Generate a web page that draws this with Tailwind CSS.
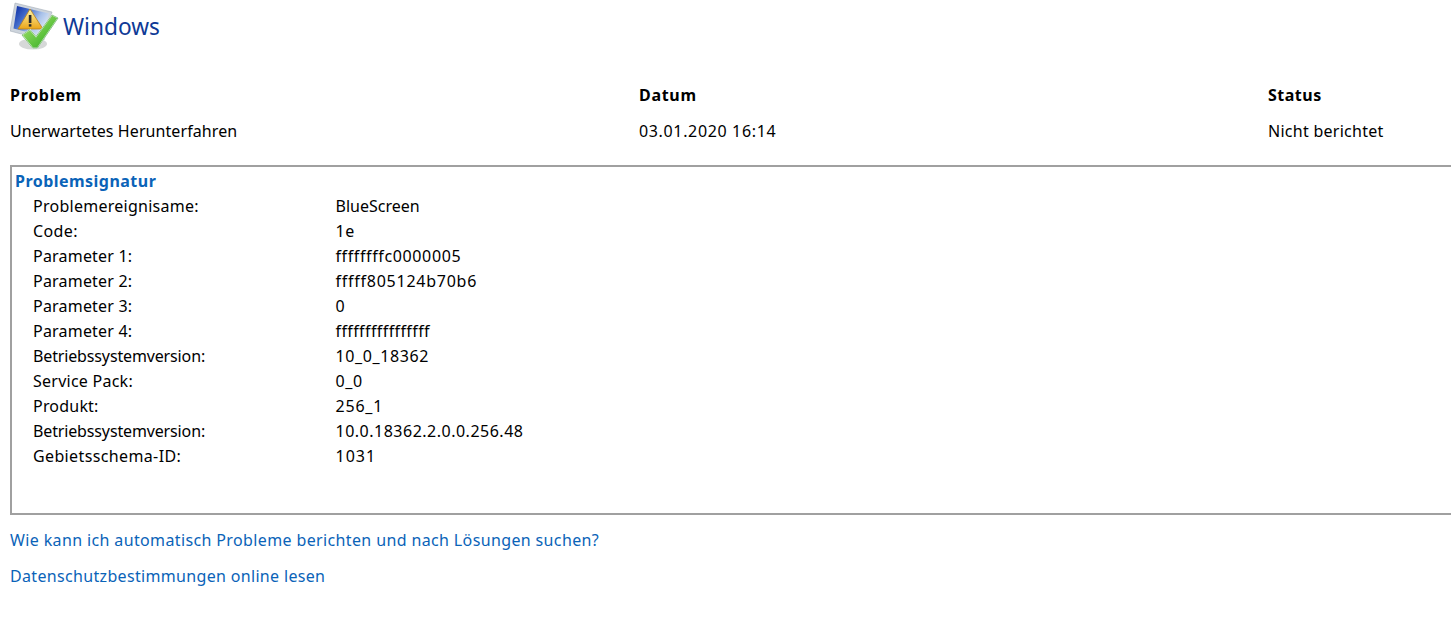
<!DOCTYPE html>
<html lang="de">
<head>
  <meta charset="UTF-8" />
  <title>Windows</title>
  <script src="https://cdn.jsdelivr.net/npm/@tailwindcss/browser@4"></script>
</head>
<body class="bg-white h-[617px] overflow-hidden font-['Noto_Sans',sans-serif] text-[16px] text-black">
  <div class="w-[1480px] pl-[10px]">
    <!-- header -->
    <div class="flex items-center h-[52px]">
      <svg class="w-[50px] h-[52px] shrink-0" viewBox="10 0 50 52">
        <defs>
          <linearGradient id="scr" x1="0" y1="0" x2="1" y2="0.6"><stop offset="0" stop-color="#0626a0"/><stop offset="0.35" stop-color="#3f68c8"/><stop offset="0.7" stop-color="#a9c2ea"/><stop offset="1" stop-color="#dfe9f8"/></linearGradient>
          <linearGradient id="tri" x1="0" y1="0" x2="0" y2="1"><stop offset="0" stop-color="#fff5a8"/><stop offset="1" stop-color="#eaa51a"/></linearGradient>
          <linearGradient id="chk" x1="0" y1="0" x2="1" y2="1"><stop offset="0" stop-color="#b5e67a"/><stop offset="0.6" stop-color="#5cc23c"/><stop offset="1" stop-color="#2e9a2a"/></linearGradient>
        </defs>
        <ellipse cx="33" cy="44" rx="14" ry="5.5" fill="#d6d8d8"/>
        <path d="M15 3 L52 12 L44 40 L10 31 Z" fill="#cdd4dc" stroke="#9aa5b0" stroke-width="0.5"/>
        <path d="M17 6 L49 13.5 L42.5 36 L13.5 28.5 Z" fill="url(#scr)"/>
        <path d="M30 9 L43 29 L18 29 Z" fill="url(#tri)" stroke="#b9801a" stroke-width="0.8"/>
        <rect x="28.8" y="15" width="2.6" height="8" fill="#2a2a2a"/>
        <rect x="28.8" y="24.2" width="2.6" height="2.4" fill="#2a2a2a"/>
        <path d="M22 35 L30 29.5 L36 36.5 L52 15 L58 18 L37.5 48 L32.5 48 Z" fill="url(#chk)" stroke="#fff" stroke-width="1.2"/>
        <path d="M22 35 L30 29.5 L36 36.5 L52 15 L58 18 L37.5 48 L32.5 48 Z" fill="none" stroke="#3d9a35" stroke-width="0.6"/>
      </svg>
      <span class="text-[#0f3a96] text-[22.7px] leading-none ml-[3px] relative top-[1px]">Windows</span>
    </div>

    <!-- columns -->
    <div class="grid grid-cols-[629px_629px_1fr] mt-[31px] leading-[24px]">
      <div class="font-bold tracking-[0.7px]">Problem</div>
      <div class="font-bold tracking-[0.7px]">Datum</div>
      <div class="font-bold tracking-[0.5px]">Status</div>
      <div class="mt-[12px] tracking-[0.08px]">Unerwartetes Herunterfahren</div>
      <div class="mt-[12px] tracking-[0.65px]">03.01.2020 16:14</div>
      <div class="mt-[12px] tracking-[0.27px]">Nicht berichtet</div>
    </div>

    <!-- signature box -->
    <div class="mt-[22px] h-[350px] border-2 border-[#a0a0a0] pl-[3px] pt-[2px] leading-[25px]">
      <div class="font-bold text-[#0a63b8] tracking-[0.47px]">Problemsignatur</div>
      <dl class="grid grid-cols-[302.5px_1fr] pl-[18px]">
        <dt class="tracking-[0.26px]">Problemereignisame:</dt><dd>BlueScreen</dd>
        <dt class="tracking-[0.4px]">Code:</dt><dd class="tracking-[0.5px]">1e</dd>
        <dt class="tracking-[0.2px]">Parameter 1:</dt><dd class="tracking-[0.62px]">ffffffffc0000005</dd>
        <dt class="tracking-[0.2px]">Parameter 2:</dt><dd class="tracking-[0.75px]">fffff805124b70b6</dd>
        <dt class="tracking-[0.2px]">Parameter 3:</dt><dd>0</dd>
        <dt class="tracking-[0.2px]">Parameter 4:</dt><dd class="tracking-[0.4px]">ffffffffffffffff</dd>
        <dt class="tracking-[-0.14px]">Betriebssystemversion:</dt><dd class="tracking-[0.6px]">10_0_18362</dd>
        <dt class="tracking-[0.25px]">Service Pack:</dt><dd class="tracking-[0.6px]">0_0</dd>
        <dt class="tracking-[0.2px]">Produkt:</dt><dd class="tracking-[0.8px]">256_1</dd>
        <dt class="tracking-[-0.14px]">Betriebssystemversion:</dt><dd class="tracking-[0.5px]">10.0.18362.2.0.0.256.48</dd>
        <dt class="tracking-[0.37px]">Gebietsschema-ID:</dt><dd class="tracking-[1px]">1031</dd>
      </dl>
    </div>

    <!-- links -->
    <div class="mt-[13px] flex flex-col gap-[12px] leading-[24px] text-[#0a63b8]">
      <a href="#" class="tracking-[0.37px]">Wie kann ich automatisch Probleme berichten und nach Lösungen suchen?</a>
      <a href="#" class="tracking-[0.33px]">Datenschutzbestimmungen online lesen</a>
    </div>
  </div>
</body>
</html>
